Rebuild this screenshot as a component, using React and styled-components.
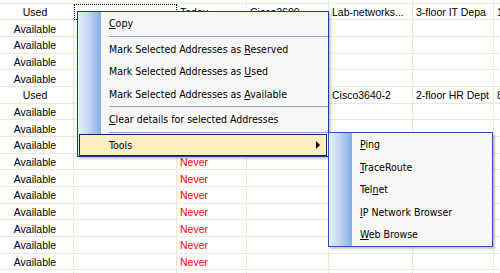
import React from "react";
import styled, { createGlobalStyle } from "styled-components";

const GlobalStyle = createGlobalStyle`
  html, body {
    margin: 0;
    padding: 0;
    background: #fff;
    overflow: hidden;
  }
  body {
    font-family: "Liberation Sans", Arial, sans-serif;
  }
`;

const Page = styled.div`
  position: relative;
  width: 500px;
  height: 273px;
  overflow: hidden;
  background: #fff;
`;

const Grid = styled.div`
  display: grid;
  grid-template-columns: 74px 103px 70px 82px 84px 81px 1fr;
  grid-template-rows: 3.8px;
  grid-auto-rows: 16.67px;
  width: 520px;
`;

const Cell = styled.div`
  box-sizing: border-box;
  border-right: 1px solid #ece9d8;
  border-bottom: 1px solid #ece9d8;
  display: flex;
  align-items: center;
  justify-content: ${(p) => (p.$center ? "center" : "flex-start")};
  padding: 1px ${(p) => (p.$center ? "3px" : "0")} 0 ${(p) => (p.$center ? "0" : "3px")};
  font-size: 10.5px;
  color: ${(p) => (p.$red ? "#ff0000" : "#000")};
  white-space: nowrap;
  overflow: hidden;
  outline: ${(p) => (p.$focused ? "1px dotted #000" : "none")};
  outline-offset: -1px;
`;

const Menu = styled.div`
  position: absolute;
  left: ${(p) => p.$left}px;
  top: ${(p) => p.$top}px;
  width: ${(p) => p.$width}px;
  box-sizing: border-box;
  border: 1px solid ${(p) => p.$border};
  background: linear-gradient(
    to right,
    #e6effc 0px,
    #c2d5f4 11px,
    #88ace6 23px,
    #f7f7f5 23px
  );
  box-shadow: 2px 2px 2px rgba(0, 0, 0, 0.22);
  font-family: "DejaVu Sans Condensed", "Liberation Sans", Arial, sans-serif;
  font-size: 10.5px;
  color: #000;
  display: flex;
  flex-direction: column;
`;

const Item = styled.div`
  height: 22.5px;
  box-sizing: border-box;
  display: flex;
  align-items: center;
  justify-content: space-between;
  padding: 0 6px 0 31px;
  white-space: nowrap;
  ${(p) =>
    p.$active &&
    `
    margin: 0 1px;
    padding-left: 29px;
    background: #ffeec2;
    border: 1px solid #0a246a;
  `}
  u {
    text-decoration-thickness: 1px;
    text-underline-offset: 1px;
  }
`;

const Separator = styled.div`
  height: 1px;
  margin: 1px 0 1px 31px;
  background: #8aa6dd;
`;

const Arrow = styled.span`
  width: 0;
  height: 0;
  border-top: 4px solid transparent;
  border-bottom: 4px solid transparent;
  border-left: 4px solid #000;
`;

const rows = [
  ["Used", "", "Today", "Cisco2600", "Lab-networks...", "3-floor IT Depa", "1"],
  ["Available", "", "Never", "", "", "", ""],
  ["Available", "", "Never", "", "", "", ""],
  ["Available", "", "Never", "", "", "", ""],
  ["Available", "", "Never", "", "", "", ""],
  ["Used", "", "Today", "Cisco3640", "Cisco3640-2", "2-floor HR Dept", "8"],
];
for (let i = 0; i < 11; i++) rows.push(["Available", "", "Never", "", "", "", ""]);

const App = () => {
  return (
    <Page>
      <GlobalStyle />
      <Grid>
        {Array.from({ length: 7 }).map((_, i) => (
          <Cell key={"top" + i} />
        ))}
        {rows.map((row, r) =>
          row.map((text, c) => (
            <Cell
              key={r + "-" + c}
              $center={c === 0}
              $red={text === "Never"}
              $focused={r === 0 && c === 1}
            >
              {text}
            </Cell>
          ))
        )}
      </Grid>

      <Menu $left={77} $top={11} $width={252} $border="#1c3a98">
        <Item>
          <span>
            <u>C</u>opy
          </span>
        </Item>
        <Separator />
        <Item>
          <span>
            Mark Selected Addresses as <u>R</u>eserved
          </span>
        </Item>
        <Item>
          <span>
            Mark Selected Addresses as <u>U</u>sed
          </span>
        </Item>
        <Item>
          <span>
            Mark Selected Addresses as <u>A</u>vailable
          </span>
        </Item>
        <Separator />
        <Item>
          <span>
            <u>C</u>lear details for selected Addresses
          </span>
        </Item>
        <Separator />
        <Item $active>
          <span>Tools</span>
          <Arrow />
        </Item>
      </Menu>

      <Menu $left={328} $top={132} $width={165} $border="#2a4fbe">
        <Item>
          <span>
            <u>P</u>ing
          </span>
        </Item>
        <Item>
          <span>
            <u>T</u>raceRoute
          </span>
        </Item>
        <Item>
          <span>
            Tel<u>n</u>et
          </span>
        </Item>
        <Item>
          <span>
            <u>I</u>P Network Browser
          </span>
        </Item>
        <Item>
          <span>
            <u>W</u>eb Browse
          </span>
        </Item>
      </Menu>
    </Page>
  );
};

export default App;
